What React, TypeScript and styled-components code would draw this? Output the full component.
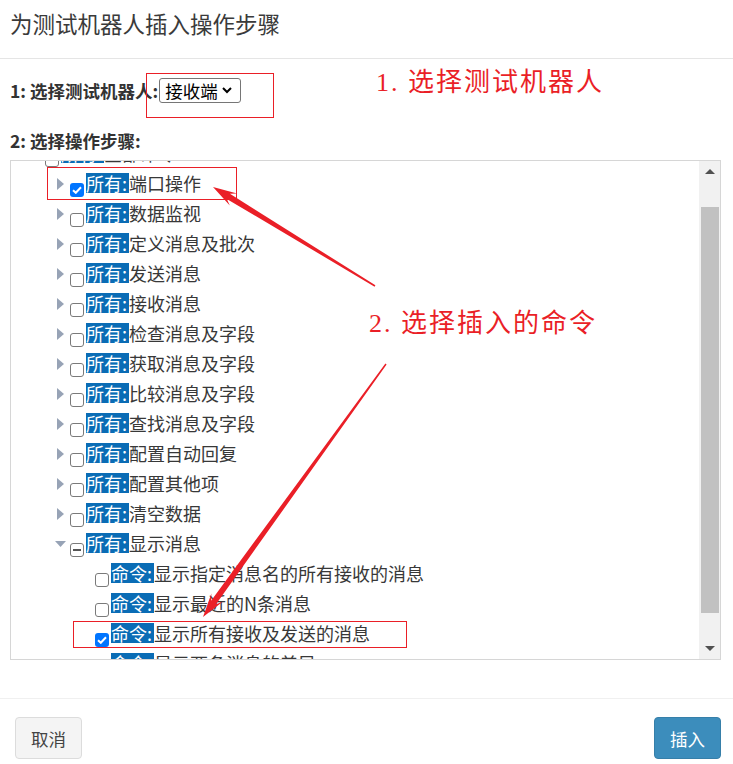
import React from "react";
import styled, { createGlobalStyle } from "styled-components";

type CheckState = "on" | "off" | "mixed";

interface Node {
	level: number;
	tag: string;
	text: string;
	check: CheckState;
	toggle?: "open" | "closed";
}

const nodes: Node[] = [
	{ level: 0, tag: "所有:", text: "全部命令", check: "mixed", toggle: "open" },
	{ level: 1, tag: "所有:", text: "端口操作", check: "on", toggle: "closed" },
	{ level: 1, tag: "所有:", text: "数据监视", check: "off", toggle: "closed" },
	{ level: 1, tag: "所有:", text: "定义消息及批次", check: "off", toggle: "closed" },
	{ level: 1, tag: "所有:", text: "发送消息", check: "off", toggle: "closed" },
	{ level: 1, tag: "所有:", text: "接收消息", check: "off", toggle: "closed" },
	{ level: 1, tag: "所有:", text: "检查消息及字段", check: "off", toggle: "closed" },
	{ level: 1, tag: "所有:", text: "获取消息及字段", check: "off", toggle: "closed" },
	{ level: 1, tag: "所有:", text: "比较消息及字段", check: "off", toggle: "closed" },
	{ level: 1, tag: "所有:", text: "查找消息及字段", check: "off", toggle: "closed" },
	{ level: 1, tag: "所有:", text: "配置自动回复", check: "off", toggle: "closed" },
	{ level: 1, tag: "所有:", text: "配置其他项", check: "off", toggle: "closed" },
	{ level: 1, tag: "所有:", text: "清空数据", check: "off", toggle: "closed" },
	{ level: 1, tag: "所有:", text: "显示消息", check: "mixed", toggle: "open" },
	{ level: 2, tag: "命令:", text: "显示指定消息名的所有接收的消息", check: "off" },
	{ level: 2, tag: "命令:", text: "显示最近的N条消息", check: "off" },
	{ level: 2, tag: "命令:", text: "显示所有接收及发送的消息", check: "on" },
	{ level: 2, tag: "命令:", text: "显示两条消息的差异", check: "off" },
];

const RED = "#ea1f27";

const GlobalStyle = createGlobalStyle`
	html, body {
		margin: 0;
		padding: 0;
		background: #fff;
	}
	body {
		font-family: "Noto Sans CJK SC", "Noto Sans", sans-serif;
		color: #333;
	}
`;

const Page = styled.div`
	position: relative;
	width: 733px;
	height: 764px;
	overflow: hidden;
`;

const Header = styled.div`
	height: 59px;
	box-sizing: border-box;
	padding: 8px 10px 0;
	border-bottom: 1px solid #e5e5e5;
`;

const Title = styled.h4`
	margin: 0;
	font-size: 22.5px;
	line-height: 30px;
	font-weight: 400;
	color: #3a3a3a;
`;

const Body = styled.div`
	padding: 19px 12px 0 10px;
`;

const Field = styled.div`
	display: flex;
	align-items: center;
	gap: 1px;
	height: 25px;
`;

const Label = styled.label<{ $gap?: number }>`
	display: block;
	margin-top: ${(p) => p.$gap ?? 0}px;
	font-size: 17.5px;
	font-weight: 700;
	line-height: 24px;
	color: #333;
`;

const Picker = styled.div`
	display: flex;
	align-items: center;
	justify-content: space-between;
	width: 82px;
	height: 25px;
	box-sizing: border-box;
	padding: 0 8px 0 5px;
	border: 1px solid #767676;
	border-radius: 3px;
	font-size: 17.5px;
	color: #000;
	background: #fff;
`;

const TreeBox = styled.div`
	display: flex;
	margin-top: 7px;
	height: 500px;
	box-sizing: border-box;
	border: 1px solid #d6d6d6;
	overflow: hidden;
`;

const TreeList = styled.ul`
	flex: 1;
	margin: -22px 0 0;
	padding: 0;
	list-style: none;
	overflow: hidden;
`;

const Row = styled.li<{ $level: number }>`
	display: flex;
	align-items: flex-start;
	height: 30px;
	padding-left: ${(p) => 19 + p.$level * 25}px;
	white-space: nowrap;
`;

const Toggle = styled.span`
	flex: none;
	display: flex;
	align-items: center;
	width: 15px;
	height: 30px;
`;

const Check = styled.span<{ $state: CheckState }>`
	flex: none;
	display: flex;
	align-items: center;
	justify-content: center;
	width: 14px;
	height: 14px;
	margin-top: 14px;
	margin-right: 2px;
	box-sizing: border-box;
	border-radius: 3px;
	border: ${(p) => (p.$state === "on" ? "none" : "1.5px solid #7a7a7a")};
	background: ${(p) => (p.$state === "on" ? "#0075ff" : "#fff")};
`;

const Text = styled.span`
	margin-top: 4px;
	font-size: 18px;
	line-height: 20px;
	color: #383838;
`;

const Tag = styled.span`
	display: inline-block;
	padding-right: 2px;
	background: #0a6cb5;
	color: #fff;
`;

const Scrollbar = styled.div`
	flex: none;
	display: flex;
	flex-direction: column;
	width: 21px;
	background: #f1f1f1;
`;

const ScrollButton = styled.div`
	display: flex;
	align-items: center;
	justify-content: center;
	height: 21px;
`;

const ScrollTrack = styled.div`
	flex: 1;
	padding: 25px 1px 0 2px;
`;

const Thumb = styled.div`
	height: 406px;
	background: #c1c1c1;
`;

const Footer = styled.div`
	display: flex;
	justify-content: space-between;
	margin-top: 38px;
	padding: 18px 12px 0 15px;
	border-top: 1px solid #f0f0f0;
`;

const Button = styled.button<{ $primary?: boolean }>`
	height: 42px;
	min-width: 67px;
	padding: 0 15px;
	font-family: inherit;
	font-size: 17.5px;
	border-radius: 4px;
	border: 1px solid ${(p) => (p.$primary ? "#367fa9" : "#dcdcdc")};
	background: ${(p) => (p.$primary ? "#3c8dbc" : "#f4f4f4")};
	color: ${(p) => (p.$primary ? "#fff" : "#444")};
`;

const Overlay = styled.div`
	position: absolute;
	inset: 0;
	pointer-events: none;
`;

const Frame = styled.div<{ $x: number; $y: number; $w: number; $h: number }>`
	position: absolute;
	left: ${(p) => p.$x}px;
	top: ${(p) => p.$y}px;
	width: ${(p) => p.$w}px;
	height: ${(p) => p.$h}px;
	box-sizing: border-box;
	border: 1px solid ${RED};
`;

const Note = styled.div<{ $x: number; $y: number }>`
	position: absolute;
	left: ${(p) => p.$x}px;
	top: ${(p) => p.$y}px;
	font-family: "Liberation Serif", "Noto Sans CJK SC", serif;
	font-size: 26px;
	line-height: 26px;
	letter-spacing: 2px;
	color: ${RED};
	white-space: nowrap;
`;

const ArrowLayer = styled.svg`
	position: absolute;
	left: 0;
	top: 0;
`;

function arrowPoints(tx: number, ty: number, px: number, py: number) {
	const dx = px - tx;
	const dy = py - ty;
	const len = Math.hypot(dx, dy);
	const ux = dx / len;
	const uy = dy / len;
	const nx = -uy;
	const ny = ux;
	const headLen = 24;
	const bx = px - ux * headLen;
	const by = py - uy * headLen;
	const nb = px - ux * (headLen - 6);
	const nby = py - uy * (headLen - 6);
	const w0 = 0.8;
	const w1 = 3;
	const hw = 7;
	const pts = [
		[tx + nx * w0, ty + ny * w0],
		[nb + nx * w1, nby + ny * w1],
		[bx + nx * hw, by + ny * hw],
		[px, py],
		[bx - nx * hw, by - ny * hw],
		[nb - nx * w1, nby - ny * w1],
		[tx - nx * w0, ty - ny * w0],
	];
	return pts.map((p) => p.map((v) => v.toFixed(1)).join(",")).join(" ");
}

function Box({ state }: { state: CheckState }) {
	return (
		<Check $state={state}>
			{state === "on" && (
				<svg width='10' height='8' viewBox='0 0 10 8'>
					<path d='M1 4.2 L3.8 6.8 L9 1.2' stroke='#fff' strokeWidth='2' fill='none' />
				</svg>
			)}
			{state === "mixed" && (
				<svg width='8' height='2' viewBox='0 0 8 2'>
					<rect width='8' height='2' fill='#555' />
				</svg>
			)}
		</Check>
	);
}

function Caret({ open }: { open: boolean }) {
	return (
		<svg width='15' height='12' viewBox='0 0 15 12'>
			{open ? (
				<polygon points='0,3 11,3 5.5,9' fill='#97a3b6' />
			) : (
				<polygon points='2,0 9,6 2,12' fill='#97a3b6' />
			)}
		</svg>
	);
}

export default function App() {
	return (
		<Page>
			<GlobalStyle />
			<Header>
				<Title>为测试机器人插入操作步骤</Title>
			</Header>
			<Body>
				<Field>
					<Label>1: 选择测试机器人:</Label>
					<Picker>
						<span>接收端</span>
						<svg width='10' height='7' viewBox='0 0 10 7'>
							<path d='M1 1 L5 5 L9 1' stroke='#000' strokeWidth='2' fill='none' />
						</svg>
					</Picker>
				</Field>
				<Label $gap={26}>2: 选择操作步骤:</Label>
				<TreeBox>
					<TreeList>
						{nodes.map((n, i) => (
							<Row key={i} $level={n.level}>
								<Toggle>{n.toggle && <Caret open={n.toggle === "open"} />}</Toggle>
								<Box state={n.check} />
								<Text>
									<Tag>{n.tag}</Tag>
									{n.text}
								</Text>
							</Row>
						))}
					</TreeList>
					<Scrollbar>
						<ScrollButton>
							<svg width='10' height='5' viewBox='0 0 10 5'>
								<polygon points='0,5 10,5 5,0' fill='#505050' />
							</svg>
						</ScrollButton>
						<ScrollTrack>
							<Thumb />
						</ScrollTrack>
						<ScrollButton>
							<svg width='10' height='5' viewBox='0 0 10 5'>
								<polygon points='0,0 10,0 5,5' fill='#505050' />
							</svg>
						</ScrollButton>
					</Scrollbar>
				</TreeBox>
			</Body>
			<Footer>
				<Button>取消</Button>
				<Button $primary>插入</Button>
			</Footer>

			<Overlay>
				<Frame $x={146} $y={73} $w={128} $h={45} />
				<Frame $x={47} $y={167} $w={190} $h={33} />
				<Frame $x={73} $y={621} $w={334} $h={27} />
				<Note $x={376} $y={70}>1. 选择测试机器人</Note>
				<Note $x={369} $y={311}>2. 选择插入的命令</Note>
				<ArrowLayer width='733' height='764'>
					<polygon points={arrowPoints(375, 286, 213, 187)} fill={RED} />
					<polygon points={arrowPoints(386, 364, 203, 617)} fill={RED} />
				</ArrowLayer>
			</Overlay>
		</Page>
	);
}
